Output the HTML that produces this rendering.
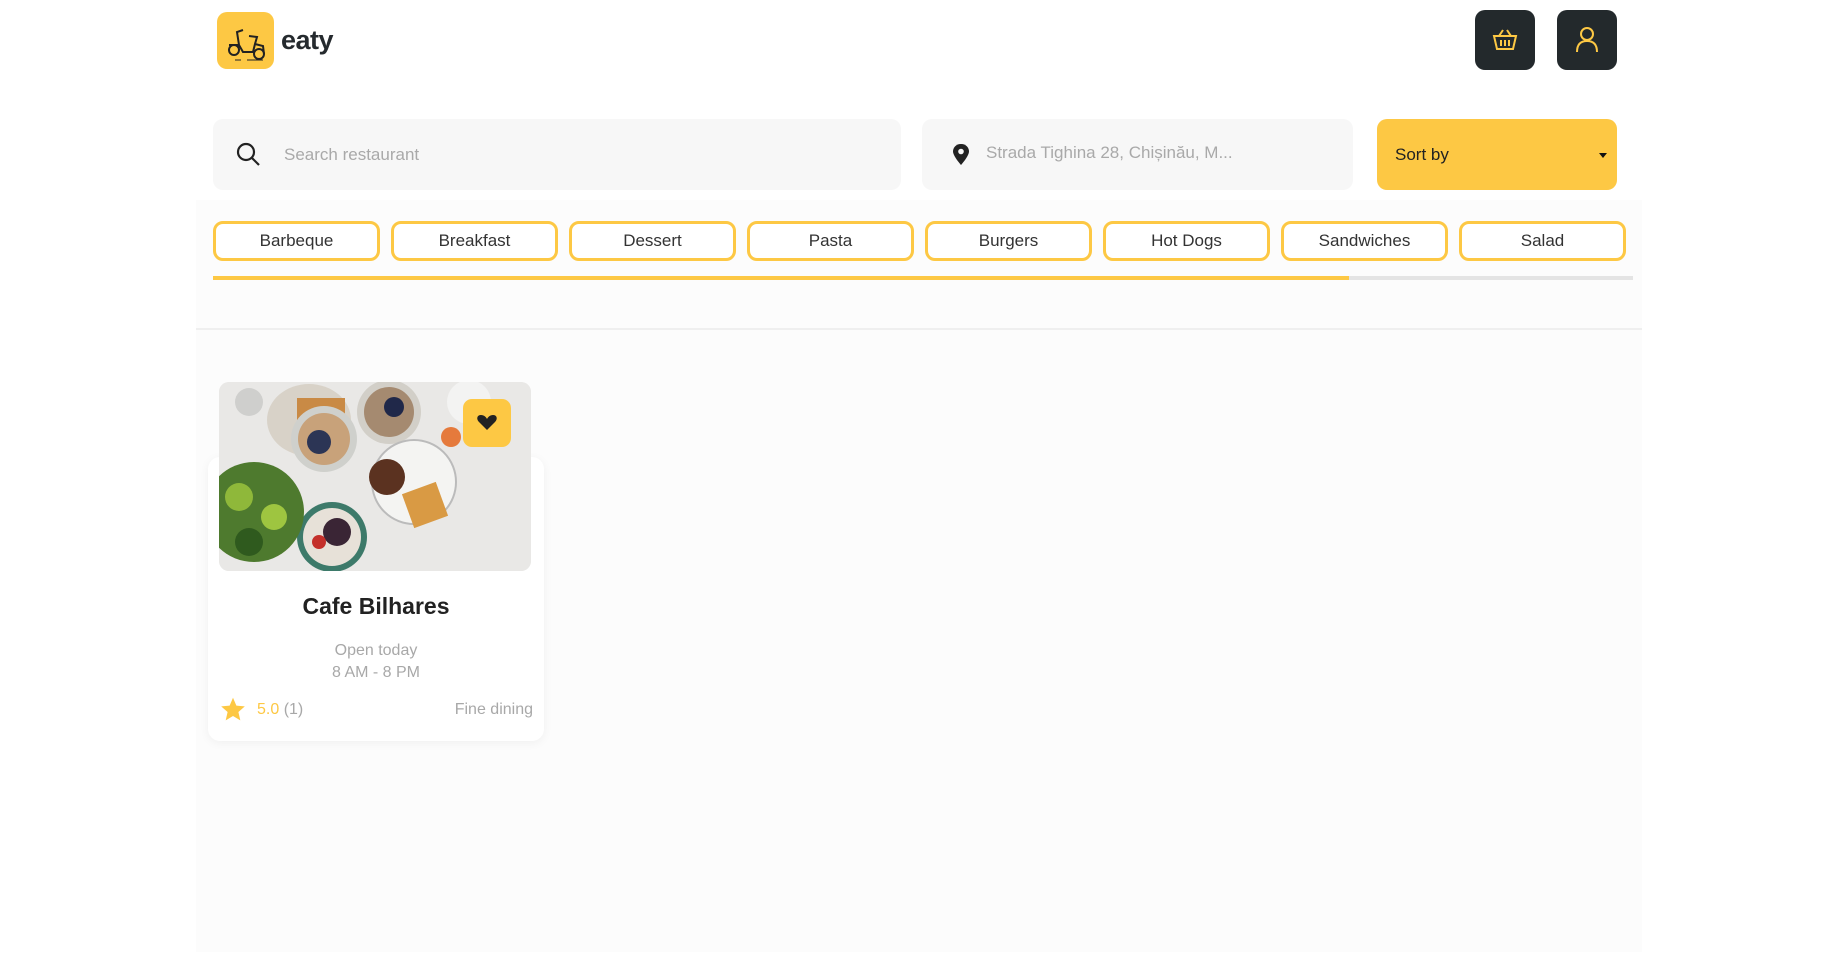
<!DOCTYPE html>
<html><head><meta charset="utf-8"><style>
*{box-sizing:border-box;margin:0;padding:0}
body{width:1830px;height:956px;background:#fff;font-family:"Liberation Sans",sans-serif;position:relative;overflow:hidden}
.abs{position:absolute}
.main{left:196px;top:200px;width:1446px;height:752px;background:#fcfcfc}
.logo{left:217px;top:12px;width:57px;height:57px;background:#fdc844;border-radius:10px}
.brand{left:281px;top:25px;font-size:27px;font-weight:bold;color:#252a2e;letter-spacing:-0.5px}
.btn{top:10px;width:60px;height:60px;background:#23292c;border-radius:10px}
.box{top:119px;height:71px;background:#f7f7f7;border-radius:10px}
.ph{color:#a9a9a9;font-size:17px}
.chip{top:221px;height:40px;width:167px;border:3px solid #fdc844;border-radius:10px;background:#fff;text-align:center;line-height:34px;font-size:17px;color:#333}
.card{left:208px;top:457px;width:336px;height:284px;background:#fff;border-radius:12px;box-shadow:0 2px 10px rgba(0,0,0,0.05)}
</style></head><body>
<div class="abs main"></div>
<div class="abs" style="left:196px;top:328px;width:1446px;height:2px;background:#efefef"></div>
<div class="abs logo">
<svg width="57" height="57" viewBox="0 0 57 57" fill="none" stroke="#222" stroke-width="2"><circle cx="17" cy="38" r="5"/><circle cx="42" cy="42" r="5"/><path d="M12 33 L22 33 L26 40 L36 40 L38 32 L46 34 L47 42 M22 33 L20 20 L26 18 M38 32 L40 25 L32 24"/><path d="M30 48 H46 M18 48 H24" stroke-width="1"/></svg>
</div>
<div class="abs brand">eaty</div>
<div class="abs btn" style="left:1475px"><svg width="60" height="60" viewBox="0 0 60 60" fill="none" stroke="#fdc844" stroke-width="2"><path d="M19 26 H41 L38 39 H22 Z M24 26 L28 20 M36 26 L32 20 M26 30 V36 M30 30 V36 M34 30 V36"/></svg></div>
<div class="abs btn" style="left:1557px"><svg width="60" height="60" viewBox="0 0 60 60" fill="none" stroke="#fdc844" stroke-width="2"><circle cx="30" cy="24" r="6"/><path d="M20 42 C20 34 24 31 30 31 C36 31 40 34 40 42"/></svg></div>

<div class="abs box" style="left:213px;width:688px">
<svg class="abs" style="left:22px;top:22px" width="28" height="28" viewBox="0 0 28 28" fill="none" stroke="#222" stroke-width="2.2"><circle cx="11" cy="11" r="8"/><path d="M17 17 L24 24"/></svg>
<div class="abs ph" style="left:71px;top:26px">Search restaurant</div></div>
<div class="abs box" style="left:922px;width:431px">
<svg class="abs" style="left:29px;top:24px" width="20" height="24" viewBox="0 0 20 24"><path d="M10 1 C4.5 1 2 5 2 8.5 C2 13 10 22 10 22 C10 22 18 13 18 8.5 C18 5 15.5 1 10 1Z" fill="#222"/><circle cx="10" cy="8.5" r="2.8" fill="#f7f7f7"/></svg>
<div class="abs ph" style="left:64px;top:24px">Strada Tighina 28, Chișinău, M...</div></div>
<div class="abs box" style="left:1377px;width:240px;background:#fdc844">
<div class="abs" style="left:18px;top:26px;font-size:17px;color:#222">Sort by</div>
<div class="abs" style="left:222px;top:34px;width:0;height:0;border-left:4px solid transparent;border-right:4px solid transparent;border-top:5px solid #111"></div></div>

<div class="abs chip" style="left:213px">Barbeque</div>
<div class="abs chip" style="left:391px">Breakfast</div>
<div class="abs chip" style="left:569px">Dessert</div>
<div class="abs chip" style="left:747px">Pasta</div>
<div class="abs chip" style="left:925px">Burgers</div>
<div class="abs chip" style="left:1103px">Hot Dogs</div>
<div class="abs chip" style="left:1281px">Sandwiches</div>
<div class="abs chip" style="left:1459px">Salad</div>
<div class="abs" style="left:213px;top:276px;width:1420px;height:4px;background:#e4e4e4"></div>
<div class="abs" style="left:213px;top:276px;width:1136px;height:4px;background:#fdc844"></div>

<div class="abs card">
<div class="abs" style="left:0;top:136px;width:336px;text-align:center;font-size:23px;font-weight:bold;color:#222">Cafe Bilhares</div>
<div class="abs" style="left:0;top:183px;width:336px;text-align:center;font-size:16px;color:#a8a8a8;line-height:22px">Open today<br>8 AM - 8 PM</div>
<svg class="abs" style="left:11px;top:239px" width="28" height="27" viewBox="0 0 24 24"><path d="M12 1.5 L15 8.5 L22.5 9.2 L16.8 14.2 L18.5 21.7 L12 17.8 L5.5 21.7 L7.2 14.2 L1.5 9.2 L9 8.5Z" fill="#fdc844"/></svg>
<div class="abs" style="left:49px;top:244px;font-size:16px;color:#fdc844">5.0 <span style="color:#a8a8a8">(1)</span></div>
<div class="abs" style="right:11px;top:244px;font-size:16px;color:#a8a8a8">Fine dining</div>
</div>
<div class="abs" style="left:219px;top:382px;width:312px;height:189px;border-radius:10px;overflow:hidden;background:#ecebea">
<svg width="312" height="189" viewBox="0 0 312 189">
<rect width="312" height="189" fill="#e9e8e6"/>
<ellipse cx="90" cy="38" rx="42" ry="36" fill="#d8d2c8"/>
<rect x="78" y="16" width="48" height="30" fill="#c98a45"/>
<circle cx="105" cy="57" r="33" fill="#cfd0cc"/><circle cx="105" cy="57" r="26" fill="#c8a27a"/><circle cx="100" cy="60" r="12" fill="#2c3555"/>
<circle cx="170" cy="30" r="32" fill="#d2cfc8"/><circle cx="170" cy="30" r="25" fill="#a58a70"/><circle cx="175" cy="25" r="10" fill="#202849"/>
<circle cx="195" cy="100" r="42" fill="#f4f4f2" stroke="#bbb" stroke-width="2"/>
<circle cx="168" cy="95" r="18" fill="#5b3220"/>
<rect x="188" y="105" width="36" height="36" transform="rotate(-20 206 123)" fill="#d99a44"/>
<circle cx="113" cy="155" r="35" fill="#3d7a6a"/><circle cx="113" cy="155" r="29" fill="#e7e1d8"/><circle cx="118" cy="150" r="14" fill="#3a2535"/><circle cx="100" cy="160" r="7" fill="#c4302a"/>
<ellipse cx="35" cy="130" rx="50" ry="50" fill="#4e7a2e"/><circle cx="20" cy="115" r="14" fill="#8fb83a"/><circle cx="55" cy="135" r="13" fill="#9ec540"/><circle cx="30" cy="160" r="14" fill="#2f5a1e"/>
<circle cx="30" cy="20" r="14" fill="#cfcfcd"/><circle cx="250" cy="20" r="22" fill="#f3f3f2"/>
<circle cx="232" cy="55" r="10" fill="#e57a3c"/>
<rect x="244" y="17" width="48" height="48" rx="9" fill="#fdc844"/>
<path d="M268 48 L260 40 C257 37 258 33 262 33 C265 33 267 35 268 37 C269 35 271 33 274 33 C278 33 279 37 276 40Z" fill="#222"/>
</svg></div>
</body></html>
